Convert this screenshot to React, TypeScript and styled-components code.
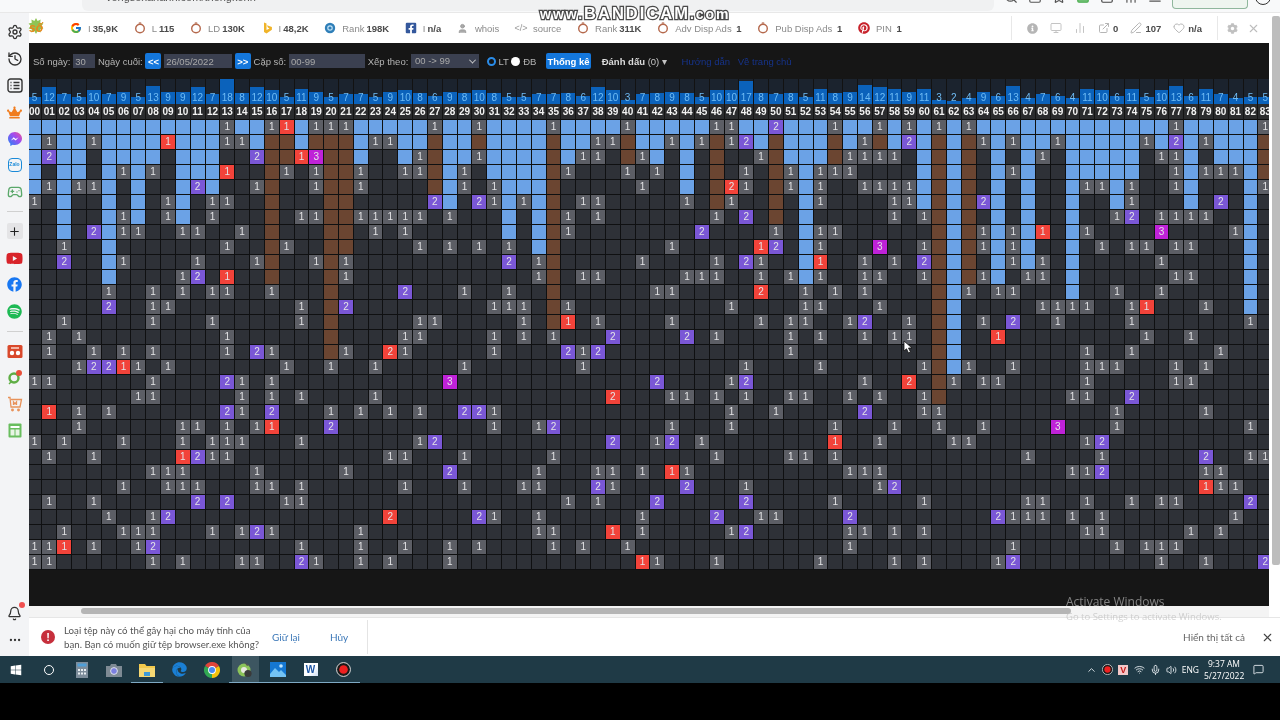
import React from "react";
import styled, { createGlobalStyle } from "styled-components";
import { Settings, History, Gamepad2, Plus, Bell, MoreHorizontal, X, ExternalLink, User, ChevronUp, Wifi, Mic, Volume2, MessageSquare, Search, Star, Monitor, BarChart2, Edit3, Heart, Square, Download, AlignJustify } from "lucide-react";
import { FaCrown, FaFacebook, FaSpotify, FaYoutube, FaPinterest, FaFacebookSquare, FaWindows, FaEdge, FaInfoCircle, FaCog } from "react-icons/fa";
import { FcGoogle } from "react-icons/fc";

const Global = createGlobalStyle`
  html, body { margin: 0; padding: 0; background: #000; overflow: hidden; }
  * { box-sizing: border-box; }
`;

const Screen = styled.div`
  position: relative;
  width: 1280px;
  height: 720px;
  display: flex;
  flex-direction: column;
  overflow: hidden;
  font-family: "Liberation Sans", Arial, sans-serif;
  filter: blur(0.35px);
`;

/* ---------- browser chrome ---------- */
const ChromeBar = styled.div`
  height: 13px;
  flex: none;
  background: #f8f9fa;
  border-bottom: 1px solid #e8e8e8;
  display: flex;
  align-items: flex-start;
  overflow: hidden;
  padding-left: 82px;
  gap: 10px;
`;
const Address = styled.div`
  width: 912px;
  height: 11px;
  background: #f0f1f2;
  border-radius: 0 0 6px 6px;
  color: #555;
  font-size: 11px;
  line-height: 11px;
  padding-left: 24px;
  overflow: hidden;
`;
const AddressText = styled.div`
  margin-top: -8px;
  white-space: nowrap;
`;
const ChromeIcon = styled.div<{ $color?: string }>`
  margin-top: -10px;
  color: ${(p) => p.$color || "#555"};
  display: flex;
`;
const Profile = styled.div`
  width: 76px;
  height: 9px;
  border: 1px solid #8fb79c;
  border-top: none;
  border-radius: 0 0 4px 4px;
  background: #eef5ef;
`;
const ProfileRing = styled.div`
  width: 16px;
  height: 16px;
  margin: -11px 0 0 -3px;
  border: 1.5px solid #333;
  border-radius: 50%;
`;

/* ---------- main body ---------- */
const Body = styled.div`
  flex: none;
  height: 643px;
  display: flex;
`;
const Sidebar = styled.div`
  width: 29px;
  flex: none;
  background: #f3f4f6;
  display: flex;
  flex-direction: column;
  align-items: center;
  padding: 6px 0 3px;
`;
const SideItem = styled.div`
  width: 29px;
  height: 26.6px;
  flex: none;
  display: flex;
  align-items: center;
  justify-content: center;
  position: relative;
  color: #333;
`;
const SideDivider = styled.div`
  width: 16px;
  height: 1px;
  flex: none;
  background: #d0d0d0;
  margin: 6px 0;
`;
const Spacer = styled.div`
  flex: 1;
`;
const PlusBox = styled.div`
  width: 16px;
  height: 16px;
  background: #e4e4e6;
  border-radius: 2px;
  display: flex;
  align-items: center;
  justify-content: center;
  color: #222;
`;
const ZaloBox = styled.div`
  width: 14px;
  height: 14px;
  border: 1.5px solid #1a8ad8;
  border-radius: 4px;
  color: #1a8ad8;
  font-size: 5px;
  font-weight: bold;
  line-height: 11px;
  text-align: center;
  overflow: hidden;
`;
const RedDot = styled.div`
  position: absolute;
  top: 2px;
  right: 4px;
  width: 6px;
  height: 6px;
  border-radius: 50%;
  background: #f05050;
`;

const Content = styled.div`
  flex: 1;
  min-width: 0;
  display: flex;
  flex-direction: column;
  background: #fff;
`;
const Upper = styled.div`
  flex: 1;
  min-height: 0;
  display: flex;
`;
const PageColumn = styled.div`
  width: 1240px;
  flex: none;
  display: flex;
  flex-direction: column;
`;
const VScroll = styled.div`
  flex: 1;
  background: #fff;
  padding: 3px 0 52px 3px;
  display: flex;
`;
const VThumb = styled.div`
  flex: 1;
  background: #bdbdbd;
  border-radius: 2px;
`;

/* ---------- SEO toolbar ---------- */
const Toolbar = styled.div`
  height: 30px;
  flex: none;
  background: #fff;
  display: flex;
  align-items: center;
  font-size: 9.5px;
  color: #8a8a8a;
`;
const SeoLogo = styled.div`
  width: 14px;
  margin: 0 27px 0 0;
  position: relative;
  color: #e8871c;
  font-size: 12px;
  font-weight: bold;
  font-style: italic;
  text-align: center;
`;
const LogoBurst = styled.svg`
  position: absolute;
  left: -1px;
  top: -3px;
  z-index: 0;
`;
const LogoText = styled.span`
  position: relative;
  z-index: 1;
`;
const SeoGroup = styled.div`
  display: flex;
  align-items: center;
  gap: 15.7px;
`;
const SeoItem = styled.div`
  display: flex;
  align-items: center;
  gap: 6px;
  white-space: nowrap;
`;
const SeoIcon = styled.div`
  width: 12px;
  height: 12px;
  display: flex;
  align-items: center;
  justify-content: center;
  color: #999;
  flex: none;
`;
const SeoValue = styled.b`
  color: #4a4a4a;
  margin-left: 2px;
`;
const CodeGlyph = styled.span`
  font-size: 9px;
  color: #999;
`;
const ToolRight = styled.div`
  margin-left: auto;
  display: flex;
  align-items: center;
  height: 100%;
`;
const ToolDivider = styled.div`
  width: 1px;
  height: 24px;
  background: #e8e8e8;
`;
const StatSet = styled.div`
  display: flex;
  align-items: center;
  gap: 12px;
  padding: 0 15px;
`;
const WindowSet = styled.div`
  display: flex;
  align-items: center;
  gap: 9px;
  padding: 0 9px;
`;
const MiniStat = styled.div`
  display: flex;
  align-items: center;
  gap: 3px;
  color: #b5b5b5;
  & b { color: #4a4a4a; font-size: 9.5px; }
`;

/* ---------- dark panel ---------- */
const Panel = styled.div`
  height: 563px;
  flex: none;
  background: #161616;
  overflow: hidden;
`;
const FilterRow = styled.div`
  height: 36px;
  display: flex;
  align-items: center;
  gap: 2.7px;
  padding-left: 4px;
  font-size: 9.5px;
  color: #b4b4b4;
  white-space: nowrap;
`;
const Field = styled.input<{ $w: number }>`
  width: ${(p) => p.$w}px;
  height: 14px;
  border: none;
  outline: none;
  padding: 0 2px;
  margin: 0;
  background: #3b4050;
  color: #a8a8a8;
  font: 9.5px "Liberation Sans", Arial, sans-serif;
`;
const NavBtn = styled.button`
  width: 16px;
  height: 16px;
  border: none;
  border-radius: 2px;
  padding: 0;
  background: #1477dc;
  color: #fff;
  font: bold 9.5px "Liberation Sans", Arial, sans-serif;
`;
const SelectBox = styled.div`
  width: 68px;
  height: 14px;
  background: #3b4050;
  color: #a8a8a8;
  padding: 0 4px;
  display: flex;
  align-items: center;
  justify-content: space-between;
  line-height: 14px;
`;
const Caret = styled.span`
  width: 5px;
  height: 5px;
  border-right: 1.2px solid #ccc;
  border-bottom: 1.2px solid #ccc;
  transform: rotate(45deg) translate(-1px, -1px);
`;
const Radio = styled.span<{ $on?: boolean }>`
  width: 9px;
  height: 9px;
  border-radius: 50%;
  background: ${(p) => (p.$on ? "#161616" : "#fff")};
  border: ${(p) => (p.$on ? "2px solid #2a8ce8" : "none")};
  flex: none;
  margin-left: ${(p) => (p.$on ? 5 : 0)}px;
`;
const ActionBtn = styled.button`
  width: 45px;
  height: 16px;
  margin-left: 7px;
  border: none;
  border-radius: 2px;
  padding: 0;
  background: #1477dc;
  color: #fff;
  font: bold 9.5px "Liberation Sans", Arial, sans-serif;
`;
const MarkLabel = styled.span`
  margin-left: 8px;
  color: #c4c4c4;
  & b { color: #ddd; }
`;
const HelpLink = styled.a<{ $ml: number }>`
  margin-left: ${(p) => p.$ml}px;
  color: #16338a;
`;

const Board = styled.div`
  margin-left: -1.4px;
  width: 1246.6px;
  display: grid;
  grid-template-columns: repeat(84, 14.84px);
`;
const ChartCell = styled.div`
  height: 25px;
  background: #1b232e;
  border-right: 1px solid #121212;
  position: relative;
  display: flex;
  align-items: flex-end;
`;
const Bar = styled.div`
  width: 100%;
  background: #0b62bb;
`;
const BarNum = styled.span`
  position: absolute;
  left: 0;
  right: 0;
  bottom: 0;
  text-align: center;
  line-height: 13px;
  font-size: 10px;
  color: #6fbcf5;
`;
const LabelCell = styled.div`
  height: 16px;
  background: #2b2c2e;
  border-right: 1px solid #141414;
  border-bottom: 1px solid #0e0e0e;
  color: #f2f2f2;
  text-align: center;
  line-height: 15px;
  font-size: 10px;
  font-weight: bold;
`;

type Kind = "empty" | "blue" | "brown" | "gray" | "purple" | "red" | "magenta";
const cellColors: Record<Kind, string> = {
  empty: "#2e3137",
  blue: "#6ba2e6",
  brown: "#6b4531",
  gray: "#5c5e65",
  purple: "#7a57d6",
  red: "#f2433a",
  magenta: "#bf22d8",
};
const GridCell = styled.div<{ $kind: Kind }>`
  height: 15px;
  background: ${(p) => cellColors[p.$kind]};
  border-right: 1px solid #0f1011;
  border-bottom: 1px solid #0f1011;
  color: #e4e4e6;
  text-align: center;
  line-height: 14px;
  font-size: 10px;
`;

/* ---------- horizontal scrollbar ---------- */
const HScroll = styled.div`
  flex: 1;
  background: #f4f4f4;
  padding: 2px 0 0 52px;
`;
const HThumb = styled.div`
  width: 990px;
  height: 6px;
  background: #b5b5b5;
  border-radius: 3px;
`;

/* ---------- download bar ---------- */
const DownloadBar = styled.div`
  height: 39px;
  flex: none;
  background: #fff;
  border-top: 1px solid #e6e6e6;
  display: flex;
  align-items: center;
  font-family: Lato, "Open Sans", sans-serif;
  font-size: 9.7px;
  color: #555;
`;
const Warn = styled.div`
  width: 14px;
  height: 14px;
  margin-left: 12px;
  border-radius: 50%;
  background: #c62f3c;
  color: #fff;
  font: bold 11px/14px "Liberation Sans", sans-serif;
  text-align: center;
  flex: none;
`;
const WarnText = styled.div`
  width: 200px;
  margin-left: 9px;
  line-height: 14px;
  white-space: nowrap;
`;
const KeepLink = styled.span<{ $ml: number }>`
  margin-left: ${(p) => p.$ml}px;
  color: #3c78b8;
  font-size: 10px;
`;
const BarDivider = styled.div`
  width: 1px;
  height: 34px;
  background: #e4e4e4;
  margin-left: 19px;
`;
const ShowAll = styled.span`
  margin-left: auto;
  color: #666;
  font-size: 10px;
`;
const CloseBox = styled.div`
  display: flex;
  margin: 0 6px 0 16px;
  color: #444;
`;

/* ---------- taskbar ---------- */
const Taskbar = styled.div`
  height: 27px;
  flex: none;
  background: #1f3a46;
  display: flex;
  align-items: stretch;
  color: #fff;
  font-family: "Open Sans", "Noto Sans", sans-serif;
`;
const TaskBtn = styled.div<{ $open?: boolean; $active?: boolean }>`
  width: 32.7px;
  display: flex;
  align-items: center;
  justify-content: center;
  background: ${(p) => (p.$active ? "#3d5661" : "transparent")};
  box-shadow: ${(p) => (p.$open ? "inset 0 -1px 0 #7fa9c4, inset 3px 0 0 #1f3a46, inset -3px 0 0 #1f3a46" : "none")};
`;
const Cortana = styled.div`
  width: 10px;
  height: 10px;
  border: 1.6px solid #fff;
  border-radius: 50%;
`;
const Tray = styled.div`
  margin-left: auto;
  display: flex;
  align-items: center;
  gap: 5px;
  padding-right: 16px;
  font-size: 8.5px;
`;
const TrayIcon = styled.div`
  width: 11px;
  display: flex;
  justify-content: center;
  color: #dfe6ea;
`;
const VBadge = styled.div`
  width: 10px;
  height: 10px;
  background: #f4c7c7;
  color: #c41a1a;
  font: bold 9px/10px "Liberation Sans", sans-serif;
  text-align: center;
`;
const Clock = styled.div`
  width: 40px;
  margin: 0 4px 0 0;
  text-align: center;
  line-height: 12px;
  font-size: 8.5px;
  white-space: nowrap;
`;
const WordBox = styled.div`
  width: 14px;
  height: 13px;
  background: linear-gradient(135deg, #fff 55%, #cfe0f5);
  color: #1f57a5;
  font: bold 10px/13px "Liberation Sans", sans-serif;
  text-align: center;
`;

/* ---------- overlays ---------- */
const Watermark = styled.div`
  position: absolute;
  left: 540px;
  top: 4px;
  font-family: "Liberation Sans", Arial, sans-serif;
  font-weight: bold;
  font-size: 14px;
  line-height: 18px;
  letter-spacing: 2px;
  color: #fff;
  -webkit-text-stroke: 2.5px #4a4a4a;
  paint-order: stroke fill;
  white-space: nowrap;
  & span { font-size: 16.5px; letter-spacing: 2px; }
`;
const Activate = styled.div`
  position: absolute;
  left: 1066px;
  top: 594px;
  font-family: "Open Sans", "Noto Sans", sans-serif;
  color: rgba(170, 170, 170, 0.75);
  font-size: 12px;
  line-height: 15px;
  white-space: nowrap;
  & small { display: block; font-size: 9.5px; line-height: 16px; color: rgba(190, 190, 190, 0.7); }
`;
const Cursor = styled.svg`
  position: absolute;
  left: 903px;
  top: 340px;
`;

/* ---------- data ---------- */
const counts = [5,12,7,5,10,7,9,5,13,9,9,12,7,18,8,12,10,5,11,9,5,7,7,5,9,10,8,6,9,8,10,8,5,5,7,7,8,6,12,10,3,7,8,9,8,5,10,10,17,8,7,8,5,11,8,9,14,12,11,9,11,3,2,4,9,6,13,4,7,6,4,11,10,6,11,5,10,13,6,11,7,4,5,5];

const hits: string[] = [
  "13 16 17r 19 20 21 27 30 35 40 46 47 50p 54 57 59 61 63 77 83",
  "1 4 9r 13 14 23 24 38 39 43 45 47 48p 56 59p 64 66 69 75 77p 79",
  "1p 15p 18r 19m 26 30 37 38 41 49 55 56 57 58 68 76 77",
  "6 8 13r 17 19 22 25 26 29 36 40 42 48 51 53 54 55 66 77 79 80 81",
  "1 3 4 11p 15 19 22 29 31 41 47R 48 51 53 56 57 58 59 71 72 74 77 83",
  "0 9 12 13 27p 30p 31 33 37 38 44 47 53 58 59 64p 74 80p",
  "6 9 12 18 19 22 23 24 25 26 28 36 38 46 48p 58 60 73 74p 76 77 78 79",
  "4p 6 7 10 11 14 23 25 36 45p 50 53 54 64 66 68r 71 76m 81",
  "2 13 17 26 28 30 32 43 49r 50p 53 57m 60 64 66 72 74 75 77 78",
  "2p 6 11 15 19 21 32p 34 41 46 48p 49 53r 56 58 60p 66 68 76",
  "10 11p 13r 21 34 37 38 44 45 46 49 51 53 56 57 60 64 67 68 77 78",
  "5 8 10 12 13 16 25p 29 32 42 43 49R 52 54 56 63 65 66 73 76",
  "5p 8 9 18 21p 31 32 33 36 47 52 53 57 68 69 70 71 74 75r 79",
  "2 8 12 18 26 27 33 36r 38 43 49 51 52 55 56p 59 64 66p 69 74 82",
  "1 3 13 25 26 31 33 35 39p 44p 46 51 53 56 58 59 65r 75 78",
  "1 4 6 8 13 15p 16 21 24R 25 31 36p 37 38p 51 71 74 80",
  "3 4p 5p 6r 7 9 17 20 23 29 37 48 53 60 63 66 71 72 73 77 79",
  "0 1 8 13p 14 16 28m 42p 47 48p 56 59R 62 64 65 71 77 78",
  "7 8 14 16 18 23 39R 43 44 46 48 51 52 55 57 60 70 71 74p",
  "1r 3 5 13p 14 16p 20 22 24 26 29p 30p 31 47 50 56p 60 61 73 79",
  "3 10 11 13 15 16r 20p 31 34 35p 43 47 54 58 61 64 69m 73 82",
  "0 2 6 10 12 13 14 18 26 27p 39p 42 43p 45 54r 57 62 63 71 72p",
  "1 4 10r 11p 12 13 24 25 29 35 46 51 52 54 67 72 79p 82 83",
  "8 9 10 15 21 28p 34 38 39 41 43r 44 55 56 57 70 71 72p 79 80",
  "6 9 10 11 15 16 18 25 29 33 34 38p 39 44p 48 57 58p 79r 80 81",
  "1 4 11p 13p 17 18 36 38 42p 48p 54 60 67 68 71 74 76 77 82p",
  "5 8 9p 24R 30p 31 34 41 46p 49 50 55p 65p 66 67 68 70 72 81",
  "2 6 7 8 12 14 15p 16 22 34 35 39r 41 47 48p 55 56 58 60 71 72 78 80",
  "0 1 2r 4 7 8p 18 22 25 28 30 35 37 40 55 66 73 75 76 77",
  "0 1 8 10 14 15 18p 19 22 24 28 41r 42 46 53 58 60 65 66p 76 79 83p",
];

type Hit = { kind: Kind; value: number };
const decode = (s: string): [number, Hit] => {
  const m = s.match(/^(\d+)([a-zA-Z]?)$/)!;
  const map: Record<string, Hit> = {
    "": { kind: "gray", value: 1 },
    p: { kind: "purple", value: 2 },
    m: { kind: "magenta", value: 3 },
    r: { kind: "red", value: 1 },
    R: { kind: "red", value: 2 },
  };
  return [Number(m[1]), map[m[2]]];
};
const table: Record<string, Hit> = {};
hits.forEach((line, r) =>
  line.split(" ").forEach((tok) => {
    const [c, h] = decode(tok);
    table[`${r}-${c}`] = h;
  })
);
const hit = (r: number, c: number): Hit | undefined => table[`${r}-${c}`];
const gapKind = (r: number, c: number): Kind => {
  let first = 0;
  while (first < 30 && !hit(first, c)) first++;
  if (r < first) return "blue";
  if (first === 0) {
    let second = 1;
    while (second < 30 && !hit(second, c)) second++;
    if (r < second) return "brown";
  }
  return "empty";
};
const pad = (n: number) => String(n).padStart(2, "0");
const columns = counts.map((_, i) => i);
const rows = Array.from({ length: 30 }, (_, i) => i);

/* ---------- drawn icons ---------- */
const Ring = ({ color = "#b5694d" }: { color?: string }) => (
  <svg width="12" height="12" viewBox="0 0 12 12">
    <circle cx="6" cy="6.5" r="4.3" fill="none" stroke={color} strokeWidth="1.4" />
    <path d="M4.8 1h2.4" stroke={color} strokeWidth="1.2" />
  </svg>
);
const Bing = () => (
  <svg width="12" height="12" viewBox="0 0 12 12">
    <path d="M3 0.5l2.5 1v6.5l3-1.6-1.6-0.8-1-2.3 5 1.7v2.7L5.5 11.5 3 10z" fill="#f0b429" />
  </svg>
);
const AlexaDot = () => (
  <svg width="12" height="12" viewBox="0 0 12 12">
    <circle cx="6" cy="6" r="5.2" fill="#2f7fb8" />
    <circle cx="6" cy="6" r="2.2" fill="none" stroke="#bfe0f5" strokeWidth="1.2" />
  </svg>
);
const ListCard = () => (
  <svg width="16" height="15" viewBox="0 0 16 15" fill="none" stroke="#333" strokeWidth="1.4">
    <rect x="1" y="1" width="14" height="13" rx="2.5" />
    <path d="M6.5 4.5h6M6.5 7.5h6M6.5 10.5h6M3.5 4.5h1M3.5 7.5h1M3.5 10.5h1" />
  </svg>
);
const Messenger = () => (
  <svg width="16" height="16" viewBox="0 0 16 16">
    <defs>
      <linearGradient id="msg" x1="0" y1="1" x2="1" y2="0">
        <stop offset="0" stopColor="#1e88f5" />
        <stop offset="0.6" stopColor="#a14cf0" />
        <stop offset="1" stopColor="#f2568a" />
      </linearGradient>
    </defs>
    <path d="M8 1C4 1 1 3.9 1 7.6c0 2 .9 3.7 2.3 4.9V15l2.4-1.3c.7.2 1.5.3 2.3.3 4 0 7-2.9 7-6.4S12 1 8 1z" fill="url(#msg)" />
    <path d="M3.8 9.6l2.9-3.3 2 1.6 2.9-1.6-2.9 3.3-2-1.6z" fill="#fff" />
  </svg>
);
const ShopIcon = () => (
  <svg width="16" height="14" viewBox="0 0 16 14">
    <rect x="0.5" y="1" width="15" height="13" rx="1.5" fill="#d9482b" />
    <circle cx="5" cy="9" r="2.2" fill="#fff" />
    <circle cx="11" cy="9" r="2.2" fill="#fff" />
    <rect x="4" y="3" width="8" height="2" fill="#f3b3a2" />
  </svg>
);
const PinIcon = () => (
  <svg width="16" height="16" viewBox="0 0 16 16">
    <circle cx="7" cy="9" r="4.5" fill="none" stroke="#5fae45" strokeWidth="2.4" />
    <path d="M2 15l3-3" stroke="#5fae45" strokeWidth="1.5" />
    <circle cx="12" cy="4" r="3" fill="#e8503a" />
  </svg>
);
const CartIcon = () => (
  <svg width="16" height="16" viewBox="0 0 16 16" fill="none" stroke="#e8925a" strokeWidth="1.3">
    <path d="M1 1.5h2l1 9.5h9l1.5-7.5H4" />
    <path d="M6.5 9V6l1.5 2 1.5-2v3" />
    <circle cx="5.5" cy="14" r="0.8" fill="#e8925a" />
    <circle cx="11.5" cy="14" r="0.8" fill="#e8925a" />
  </svg>
);
const SheetIcon = () => (
  <svg width="14" height="15" viewBox="0 0 14 15">
    <rect x="0.5" y="0.5" width="13" height="14" rx="1" fill="#69bd5e" />
    <rect x="2.5" y="3" width="9" height="2" fill="#fff" />
    <rect x="2.5" y="6.5" width="4" height="6" fill="#e8f5e5" />
    <rect x="7.5" y="6.5" width="4" height="6" fill="#e8f5e5" />
  </svg>
);
const ChromeGlyph = () => (
  <svg width="16" height="16" viewBox="0 0 16 16">
    <path d="M8 8L1.07 4A8 8 0 0 1 14.93 4z" fill="#e0443a" />
    <path d="M8 8L14.93 4A8 8 0 0 1 8 16z" fill="#f4c20d" />
    <path d="M8 8L8 16A8 8 0 0 1 1.07 4z" fill="#31a853" />
    <circle cx="8" cy="8" r="3.9" fill="#fff" />
    <circle cx="8" cy="8" r="3" fill="#4a8af4" />
  </svg>
);
const CalcIcon = () => (
  <svg width="12" height="16" viewBox="0 0 12 16">
    <rect width="12" height="16" fill="#7d8d9b" />
    <rect x="1.5" y="1.5" width="9" height="3" fill="#4f9fd8" />
    <path d="M2 7h2v2H2zM5 7h2v2H5zM8 7h2v2H8zM2 10.5h2v2H2zM5 10.5h2v2H5zM8 10.5h2v2H8z" fill="#e8eef2" />
  </svg>
);
const CameraIcon = () => (
  <svg width="16" height="14" viewBox="0 0 16 14">
    <path d="M0 3h4l1-2h5l1 2h5v11H0z" fill="#7e8a94" />
    <circle cx="8" cy="8" r="3.4" fill="#7b7fe0" stroke="#dfe3e8" strokeWidth="1" />
  </svg>
);
const FolderIcon = () => (
  <svg width="16" height="14" viewBox="0 0 16 14">
    <path d="M0 1h6l1.5 2H16v11H0z" fill="#f2c94c" />
    <rect x="0" y="5" width="16" height="9" fill="#f6d873" />
    <rect x="5" y="9" width="6" height="4" fill="#3f9bd8" />
  </svg>
);
const AppIcon = () => (
  <svg width="16" height="16" viewBox="0 0 16 16">
    <circle cx="7" cy="8" r="6.5" fill="#8cc45a" />
    <circle cx="7" cy="8" r="3" fill="#e8e8e0" />
    <circle cx="11" cy="11.5" r="3.6" fill="#3a3a3a" />
    <path d="M7 0l5 3-2 1z" fill="#555" />
  </svg>
);
const PhotoIcon = () => (
  <svg width="16" height="15" viewBox="0 0 16 15">
    <rect width="16" height="15" fill="#1577d2" />
    <circle cx="11" cy="4" r="1.8" fill="#bfe6ff" />
    <path d="M0 12l5-6 4 4 2-2 5 5v2H0z" fill="#74c3f4" />
  </svg>
);
const RecordIcon = ({ size }: { size: number }) => (
  <svg width={size} height={size} viewBox="0 0 16 16">
    <circle cx="8" cy="8" r="7.4" fill="#1a1a1a" stroke="#e8e8e8" strokeWidth="1" />
    <circle cx="8" cy="8" r="4.6" fill="#ee2020" />
  </svg>
);

const Seo = ({ icon, label, value }: { icon: React.ReactNode; label?: string; value?: string }) => (
  <SeoItem>
    <SeoIcon>{icon}</SeoIcon>
    <span>
      {label}
      {value && <SeoValue>{value}</SeoValue>}
    </span>
  </SeoItem>
);

export default function App() {
  return (
    <>
      <Global />
      <Screen>
        <ChromeBar>
          <Address>
            <AddressText>vongsoxahanh.com/thongkenh</AddressText>
          </Address>
          <ChromeIcon><Search size={14} /></ChromeIcon>
          <ChromeIcon><Square size={14} /></ChromeIcon>
          <ChromeIcon><Star size={14} /></ChromeIcon>
          <ChromeIcon $color="#4caf50"><Square size={14} fill="#6fbf73" /></ChromeIcon>
          <ChromeIcon $color="#444"><Download size={14} /></ChromeIcon>
          <ChromeIcon><BarChart2 size={14} /></ChromeIcon>
          <ChromeIcon><AlignJustify size={14} /></ChromeIcon>
          <Profile />
          <ProfileRing />
        </ChromeBar>
        <Body>
          <Sidebar>
            <SideItem><Settings size={16} /></SideItem>
            <SideItem><History size={16} /></SideItem>
            <SideItem><ListCard /></SideItem>
            <SideItem><FaCrown size={15} color="#f07c1e" /></SideItem>
            <SideItem><Messenger /></SideItem>
            <SideItem><ZaloBox>Zalo</ZaloBox></SideItem>
            <SideItem><Gamepad2 size={16} color="#5aa86a" /></SideItem>
            <SideDivider />
            <SideItem><PlusBox><Plus size={13} /></PlusBox></SideItem>
            <SideItem><FaYoutube size={17} color="#d8232a" /></SideItem>
            <SideItem><FaFacebook size={15} color="#1877f2" /></SideItem>
            <SideItem><FaSpotify size={15} color="#1db954" /></SideItem>
            <SideDivider />
            <SideItem><ShopIcon /></SideItem>
            <SideItem><PinIcon /></SideItem>
            <SideItem><CartIcon /></SideItem>
            <SideItem><SheetIcon /></SideItem>
            <Spacer />
            <SideItem><Bell size={15} /><RedDot /></SideItem>
            <SideItem><MoreHorizontal size={14} /></SideItem>
          </Sidebar>
          <Content>
            <Upper>
              <PageColumn>
                <Toolbar>
                  <SeoLogo>
                    <LogoBurst width="16" height="18" viewBox="0 0 16 18">
                      <path d="M8 0l1.6 3 3-1.4-.4 3.2 3.2.8-2 2.4 2 2.6-3.2.6.4 3.3-3-1.5L8 16l-1.6-3-3 1.5.4-3.3L.6 10.6l2-2.6-2-2.4 3.2-.8-.4-3.2 3 1.4z" fill="#8fc454" />
                    </LogoBurst>
                    <LogoText>số</LogoText>
                  </SeoLogo>
                  <SeoGroup>
                    <Seo icon={<FcGoogle size={12} />} label="I" value="35,9K" />
                    <Seo icon={<Ring />} label="L" value="115" />
                    <Seo icon={<Ring />} label="LD" value="130K" />
                    <Seo icon={<Bing />} label="I" value="48,2K" />
                    <Seo icon={<AlexaDot />} label="Rank" value="198K" />
                    <Seo icon={<FaFacebookSquare size={12} color="#34589c" />} label="I" value="n/a" />
                    <Seo icon={<User size={11} fill="#aaa" />} label="whois" />
                    <Seo icon={<CodeGlyph>&lt;/&gt;</CodeGlyph>} label="source" />
                    <Seo icon={<Ring />} label="Rank" value="311K" />
                    <Seo icon={<Ring />} label="Adv Disp Ads" value=" 1" />
                    <Seo icon={<Ring />} label="Pub Disp Ads" value=" 1" />
                    <Seo icon={<FaPinterest size={12} color="#c8232c" />} label="PIN" value=" 1" />
                  </SeoGroup>
                  <ToolRight>
                    <ToolDivider />
                    <StatSet>
                      <FaInfoCircle size={11} color="#b5b5b5" />
                      <Monitor size={12} color="#c4c4c4" />
                      <BarChart2 size={12} color="#c4c4c4" />
                      <MiniStat><ExternalLink size={12} /><b>0</b></MiniStat>
                      <MiniStat><Edit3 size={12} /><b>107</b></MiniStat>
                      <MiniStat><Heart size={12} /><b>n/a</b></MiniStat>
                    </StatSet>
                    <ToolDivider />
                    <WindowSet>
                      <FaCog size={11} color="#c0c0c0" />
                      <X size={13} color="#bdbdbd" />
                    </WindowSet>
                  </ToolRight>
                </Toolbar>
                <Panel>
                  <FilterRow>
                    <span>Số ngày:</span>
                    <Field $w={22} value="30" readOnly />
                    <span>Ngày cuối:</span>
                    <NavBtn>&lt;&lt;</NavBtn>
                    <Field $w={68} value="26/05/2022" readOnly />
                    <NavBtn>&gt;&gt;</NavBtn>
                    <span>Cặp số:</span>
                    <Field $w={76} value="00-99" readOnly />
                    <span>Xếp theo:</span>
                    <SelectBox>
                      <span>00 -&gt; 99</span>
                      <Caret />
                    </SelectBox>
                    <Radio $on />
                    <span>LT</span>
                    <Radio />
                    <span>ĐB</span>
                    <ActionBtn>Thống kê</ActionBtn>
                    <MarkLabel>
                      <b>Đánh dấu</b> (0) ▾
                    </MarkLabel>
                    <HelpLink $ml={12}>Hướng dẫn</HelpLink>
                    <HelpLink $ml={5}>Về trang chủ</HelpLink>
                  </FilterRow>
                  <Board>
                    {columns.map((c) => (
                      <ChartCell key={c}>
                        <Bar style={{ height: counts[c] * 1.38 }} />
                        <BarNum>{counts[c]}</BarNum>
                      </ChartCell>
                    ))}
                    {columns.map((c) => (
                      <LabelCell key={c}>{pad(c)}</LabelCell>
                    ))}
                    {rows.map((r) =>
                      columns.map((c) => {
                        const h = hit(r, c);
                        return (
                          <GridCell key={`${r}-${c}`} $kind={h ? h.kind : gapKind(r, c)}>
                            {h ? h.value : ""}
                          </GridCell>
                        );
                      })
                    )}
                  </Board>
                </Panel>
                <HScroll>
                  <HThumb />
                </HScroll>
              </PageColumn>
              <VScroll>
                <VThumb />
              </VScroll>
            </Upper>
            <DownloadBar>
              <Warn>!</Warn>
              <WarnText>
                Loại tệp này có thể gây hại cho máy tính của
                <br />
                bạn. Bạn có muốn giữ tệp browser.exe không?
              </WarnText>
              <KeepLink $ml={8}>Giữ lại</KeepLink>
              <KeepLink $ml={30}>Hủy</KeepLink>
              <BarDivider />
              <ShowAll>Hiển thị tất cả</ShowAll>
              <CloseBox><X size={13} /></CloseBox>
            </DownloadBar>
          </Content>
        </Body>
        <Taskbar>
          <TaskBtn><FaWindows size={12} /></TaskBtn>
          <TaskBtn><Cortana /></TaskBtn>
          <TaskBtn><CalcIcon /></TaskBtn>
          <TaskBtn><CameraIcon /></TaskBtn>
          <TaskBtn $open><FolderIcon /></TaskBtn>
          <TaskBtn><FaEdge size={15} color="#1a7fd4" /></TaskBtn>
          <TaskBtn><ChromeGlyph /></TaskBtn>
          <TaskBtn $open $active><AppIcon /></TaskBtn>
          <TaskBtn $open><PhotoIcon /></TaskBtn>
          <TaskBtn $open><WordBox>W</WordBox></TaskBtn>
          <TaskBtn $open><RecordIcon size={15} /></TaskBtn>
          <Tray>
            <TrayIcon><ChevronUp size={12} /></TrayIcon>
            <TrayIcon><RecordIcon size={11} /></TrayIcon>
            <TrayIcon><VBadge>V</VBadge></TrayIcon>
            <TrayIcon><Wifi size={11} /></TrayIcon>
            <TrayIcon><Mic size={12} /></TrayIcon>
            <TrayIcon><Volume2 size={12} /></TrayIcon>
            <span>ENG</span>
            <Clock>
              9:37 AM
              <br />
              5/27/2022
            </Clock>
            <TrayIcon><MessageSquare size={13} /></TrayIcon>
          </Tray>
        </Taskbar>
        <Spacer />
        <Watermark>
          www.<span>BANDICAM</span>.com
        </Watermark>
        <Activate>
          Activate Windows
          <small>Go to Settings to activate Windows.</small>
        </Activate>
        <Cursor width="10" height="14" viewBox="0 0 10 14">
          <path d="M1 1v10l2.5-2.2L5.5 13l2-1-2-4H9z" fill="#fff" stroke="#111" strokeWidth="0.8" />
        </Cursor>
      </Screen>
    </>
  );
}
